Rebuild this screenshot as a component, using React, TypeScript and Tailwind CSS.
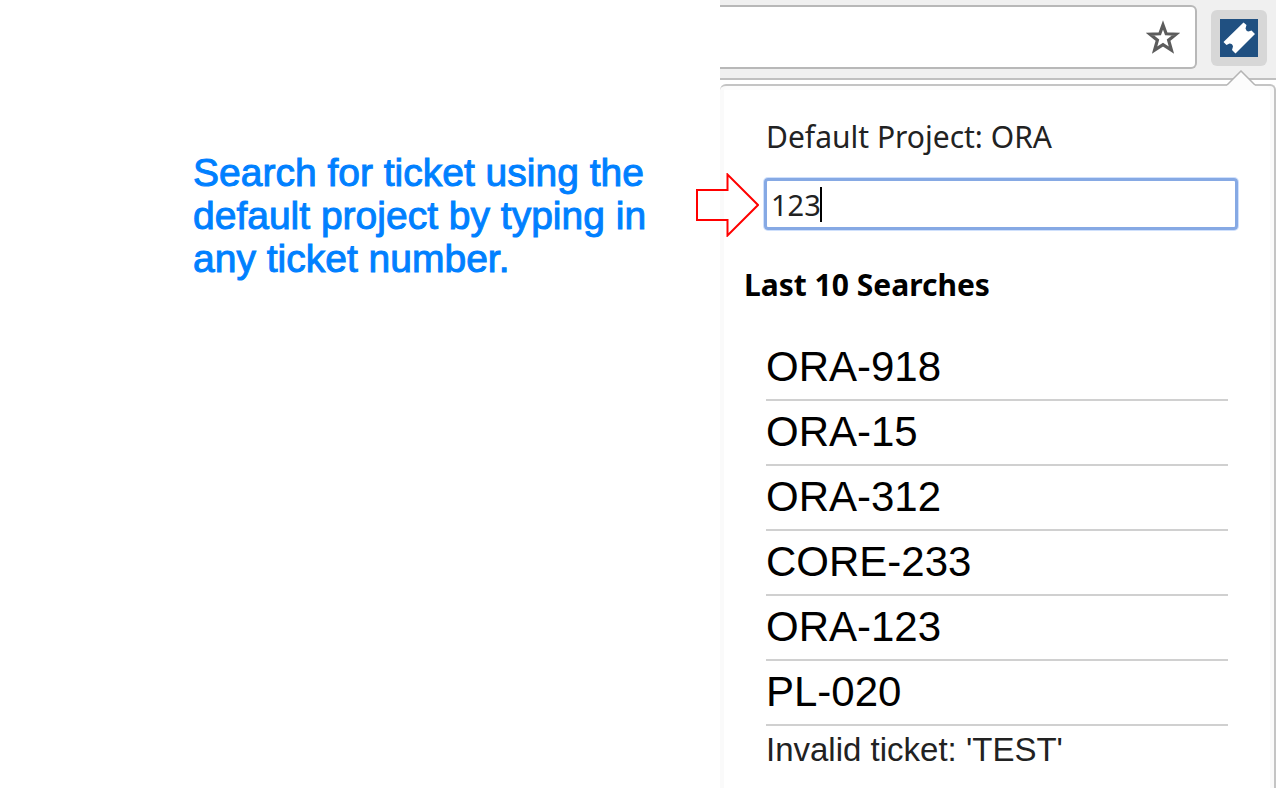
const searches = ["ORA-918", "ORA-15", "ORA-312", "CORE-233", "ORA-123", "PL-020"];

function StarIcon() {
  return (
    <svg viewBox="0 0 34 34" className="block h-[34px] w-[34px]" aria-hidden="true">
      <path
        d="M17 5 L20.2 13.8 L30 14.2 L22.6 20.2 L25.4 30 L17 24.6 L8.6 30 L11.4 20.2 L4 14.2 L13.8 13.8 Z"
        fill="none"
        stroke="#5c5c5c"
        strokeWidth="3.2"
      />
    </svg>
  );
}

function TicketIcon() {
  return (
    <svg viewBox="0 0 38 38" className="block h-[38px] w-[38px]" aria-hidden="true">
      <rect width="38" height="38" fill="#205081" />
      <path
        d="M23.500 3.500 L26.500 6 L25.500 9.500 Q26 12 28.500 12.500 L31.500 11.500 L35 15 L15.500 34.500 L12 31 L13 27.500 Q12.500 24.500 9.500 24.500 L6.500 26 L3.500 23 Z"
        fill="#fff"
      />
    </svg>
  );
}

function PointerArrow() {
  return (
    <svg viewBox="0 0 64 64" className="absolute -left-[71px] -top-[5px] h-[64px] w-[64px]" aria-hidden="true">
      <path d="M2 17 H32.500 V1.500 L63 32 L32.500 62.500 V47 H2 Z" fill="none" stroke="#f00" strokeWidth="2" />
    </svg>
  );
}

export default function App() {
  return (
    <div className="flex min-h-screen items-start bg-white font-['Liberation_Sans',sans-serif] text-black">
      <main className="flex-1 pl-[193px] pt-[151px]">
        <p className="max-w-[470px] text-[39px] leading-[43px] text-[#0080ff] [-webkit-text-stroke:1px_#0080ff]">
          Search for ticket using the default project by typing in any ticket number.
        </p>
      </main>

      <section className="mr-1 w-[556px] shrink-0">
        <header className="flex items-start border-b-2 border-[#c0c0c0] bg-[#f0f0f0] pb-[9px] pt-[5px]">
          <div className="flex h-16 flex-1 items-center justify-end rounded-r-md border-2 border-l-0 border-[#b8b8b8] bg-white pr-[15px]">
            <button type="button" aria-label="Bookmark this page">
              <StarIcon />
            </button>
          </div>
          <button
            type="button"
            aria-label="Ticket search"
            className="ml-[14px] mr-[9px] mt-[5px] rounded-md bg-[#d7d7d7] p-[9px]"
          >
            <TicketIcon />
          </button>
        </header>

        <div className="relative mt-1 rounded-t-md border-r-2 border-t-2 border-[#c4c4c4] pb-[18px] pl-6 shadow-[inset_4px_0_#fafafa,inset_-4px_0_#fafafa,inset_0_4px_#fcfcfc]">
          <svg viewBox="0 0 30 17" className="absolute -top-[16px] right-[18px] h-[17px] w-[30px]" aria-hidden="true">
            <path d="M1 15 L15 1 L29 15 V17 H1 Z" fill="#fcfcfc" />
            <path d="M1 15 L15 1 L29 15" fill="none" stroke="#b4b4b4" strokeWidth="1.5" />
          </svg>

          <div className="pl-[22px] pt-[30px]">
            <label htmlFor="ticket" className="block font-['Noto_Sans',sans-serif] text-[30px] leading-[42px] text-[#222]">
              Default Project: ORA
            </label>
            <div className="relative mr-9 mt-[20px]">
              <PointerArrow />
              <input
                id="ticket"
                type="text"
                defaultValue="123"
                className="-ml-[2px] block h-[52px] w-[474px] rounded-[4px] border-[3px] border-[#86a9e4] px-1 font-['Noto_Sans',sans-serif] text-[29px] text-[#222] outline-none ring-1 ring-[#cfe0fc]"
              />
              <span className="absolute left-[54px] top-[9px] h-[35px] w-[2px] bg-black" />
            </div>
          </div>

          <h2 className="mt-[34px] font-['Noto_Sans',sans-serif] text-[30px] font-bold leading-[42px]">
            Last 10 Searches
          </h2>

          <ul className="ml-[22px] mr-[46px] mt-[30px]">
            {searches.map((ticket) => (
              <li key={ticket} className="border-b-2 border-[#d0d0d0] pb-[2px] text-[42px] leading-[61px]">
                {ticket}
              </li>
            ))}
          </ul>
          <p className="ml-[22px] mt-1 text-[33px] leading-[40px] text-[#222]">Invalid ticket: 'TEST'</p>
        </div>
      </section>
    </div>
  );
}
